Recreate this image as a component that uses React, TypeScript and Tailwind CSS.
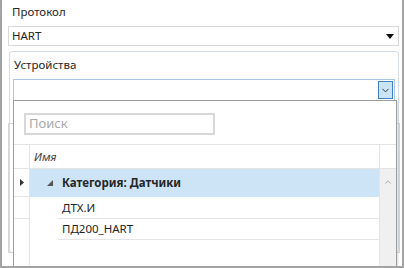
import { ChevronDown, ChevronUp } from "lucide-react";

const App = () => {
    return (
        <div className="relative w-[404px] h-[268px] bg-white border-x-2 border-b-2 border-[#a3a3a3] overflow-hidden text-[11.5px] text-[#262626]" style={{ fontFamily: '"Noto Sans", "Open Sans", sans-serif' }}>
            <div className="pl-[6px] pr-[3px] pt-[4px]">
                <div className="pl-[4px] leading-[16px] h-[16px]">Протокол</div>
                <div className="mt-[6px] h-[20px] border border-[#dadada] flex items-center justify-between pl-[3px] pr-[4px]">
                    <span className="leading-[16px]">HART</span>
                    <svg width="8" height="5" viewBox="0 0 8 5"><path d="M0 0h8L4 5z" fill="#111" /></svg>
                </div>

                {/* группа Устройства */}
                <div className="mt-[5px] ml-[1px] h-[202px] border border-[#d5dee6] rounded-[3px] px-[3px] pt-[5px]">
                    <div className="pl-[1px] leading-[16px] h-[16px]">Устройства</div>
                    <div className="mt-[6px] h-[22px] border border-[#a9c9e6] flex items-stretch justify-end p-[1px]">
                        <div className="w-[15px] bg-[#cce4f7] border border-[#3d82c4] flex items-center justify-center">
                            <ChevronDown size={11} strokeWidth={2} color="#2b2b2b" />
                        </div>
                    </div>
                    <div className="mt-[22px] -mx-[5px] h-[130px] border border-[#d4d4d4]" />
                </div>
            </div>

            {/* выпадающий список */}
            <div className="absolute left-[11px] top-[100px] w-[384px] h-[170px] bg-white border border-[#9d9d9d] shadow-[1px_1px_2px_rgba(0,0,0,0.15)]">
                <div className="h-[44px] border-b border-[#e4e4e4] pl-[10px] pt-[12px]">
                    <div className="w-[191px] h-[22px] border-2 border-[#d8d8d8] flex items-center pl-[3px] text-[13px] text-[#a8a8a8]">Поиск</div>
                </div>
                <div className="flex h-[24px] border-b border-[#e4e4e4]">
                    <div className="w-[16px] border-r border-[#e4e4e4]" />
                    <div className="flex-1 flex items-center pl-[4px] italic text-[#444]">Имя</div>
                    <div className="w-[17px] border-l border-[#e4e4e4]" />
                </div>
                <div className="flex h-[100px]">
                    <div className="w-[16px] border-r border-[#e4e4e4] flex flex-col">
                        <div className="h-[28px] border-b border-[#e4e4e4] flex items-center justify-center">
                            <svg width="4" height="7" viewBox="0 0 4 7"><path d="M0 0l4 3.5L0 7z" fill="#333" /></svg>
                        </div>
                        <div className="h-[22px] border-b border-[#e4e4e4]" />
                        <div className="h-[20px]" />
                    </div>
                    <div className="flex-1 flex flex-col">
                        <div className="h-[28px] bg-[#cde4f6] flex items-center pl-[17px]">
                            <svg width="6" height="6" viewBox="0 0 6 6" className="mr-[9px]"><path d="M6 0v6H0z" fill="#555" /></svg>
                            <span className="font-bold">Категория: Датчики</span>
                        </div>
                        <div className="ml-[28px] h-[22px] border-b border-[#e4e4e4] flex items-center pl-[4px]">ДТХ.И</div>
                        <div className="ml-[28px] h-[21px] border-b border-[#e4e4e4] flex items-center pl-[4px]">ПД200_HART</div>
                    </div>
                    <div className="w-[17px] bg-[#f0f0f0] border-l border-[#e4e4e4] flex justify-center pt-[8px]">
                        <ChevronUp size={10} strokeWidth={2} color="#9a9a9a" />
                    </div>
                </div>
            </div>
        </div>
    );
};

export default App;
